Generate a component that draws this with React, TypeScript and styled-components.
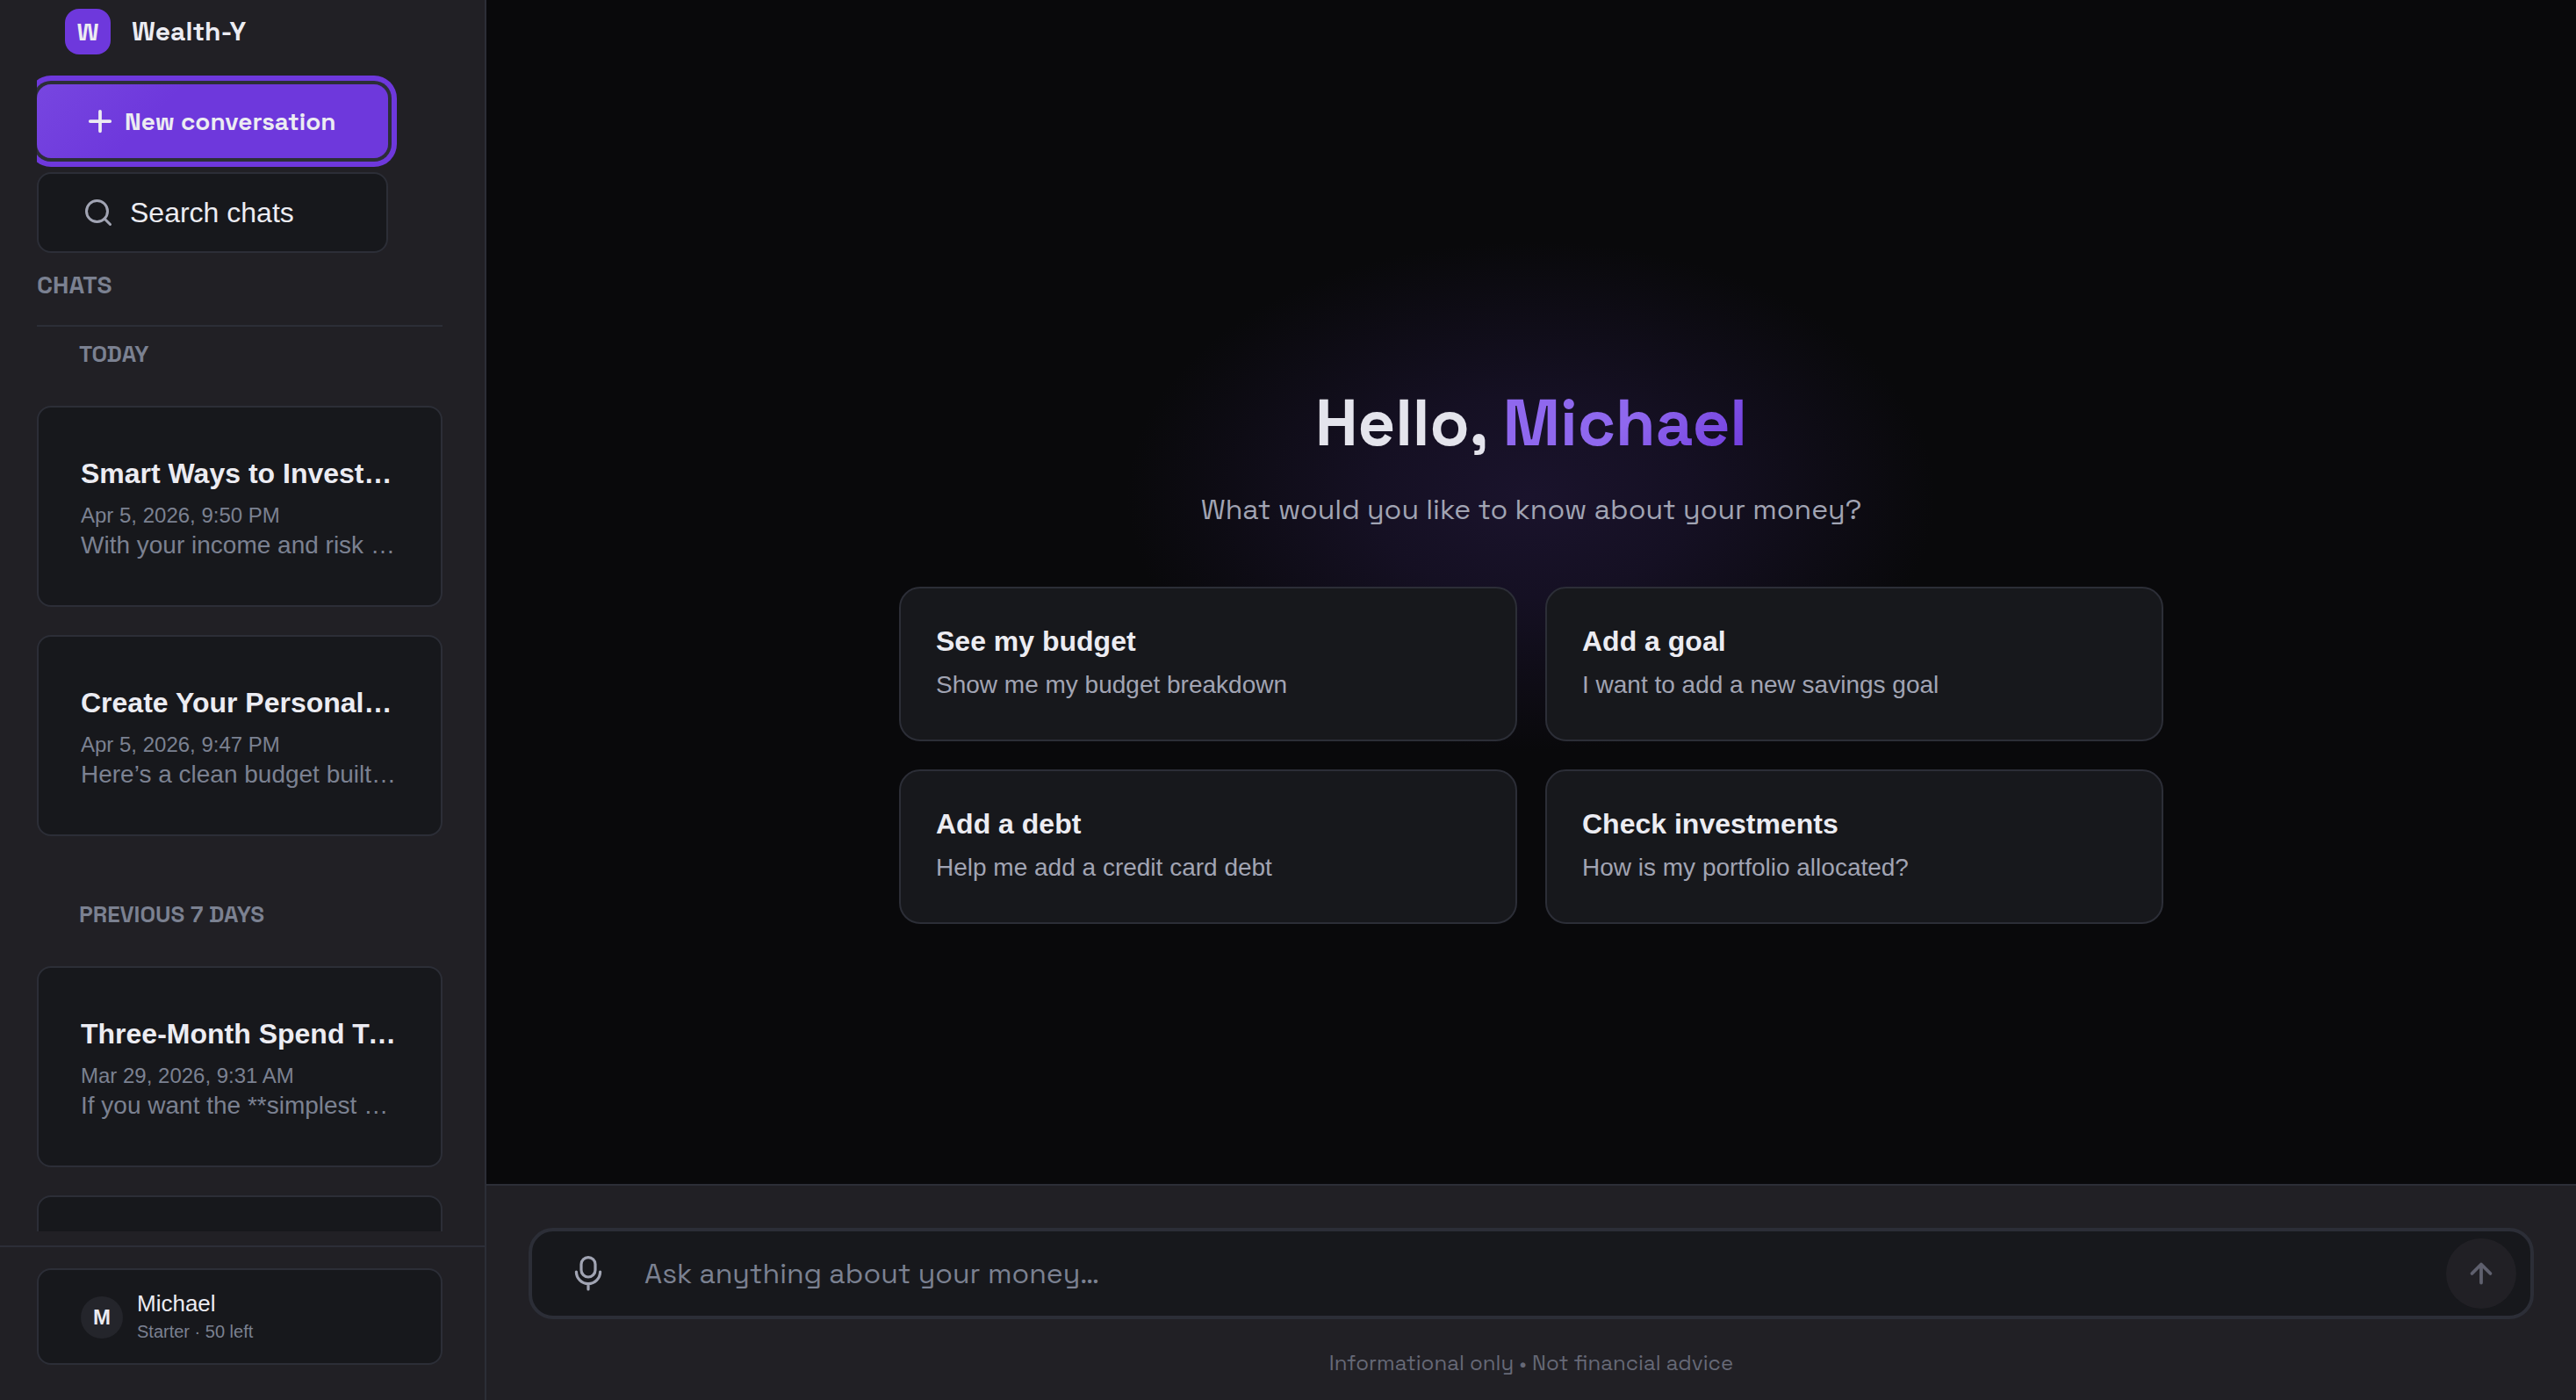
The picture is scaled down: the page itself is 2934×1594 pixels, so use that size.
import React from "react";
import styled, { createGlobalStyle, css } from "styled-components";

const display = `"Space Grotesk", Inter, "Liberation Sans", sans-serif`;
const body = `"Liberation Sans", Arial, sans-serif`;

const color = {
  page: "#09090b",
  panel: "#212025",
  card: "#17181c",
  line: "#2c2e37",
  text: "#ececf2",
  heading: "#e4e4ec",
  soft: "#a1a4b3",
  muted: "#7b8191",
  faint: "#666977",
  accent: "#6e38dc",
  accentLight: "#8f68ee",
};

const GlobalStyle = createGlobalStyle`
  *, *::before, *::after { box-sizing: border-box; }
  body { margin: 0; background: ${color.page}; }
  button, input { font: inherit; color: inherit; }
  h1, h2, h3, p, ul { margin: 0; padding: 0; }
  ul { list-style: none; }
`;

const Layout = styled.div`
  display: flex;
  height: 100vh;
  color: ${color.text};
  background: ${color.page};
  font-family: ${body};
`;

const surface = css`
  background: ${color.card};
  border: 2px solid ${color.line};
  border-radius: 16px;
`;

const Sidebar = styled.aside`
  display: flex;
  flex-direction: column;
  flex: 0 0 554px;
  min-width: 0;
  min-height: 0;
  background: ${color.panel};
  border-right: 2px solid ${color.line};
`;

const SidebarBody = styled.div`
  display: flex;
  flex-direction: column;
  flex: 1;
  min-height: 0;
  margin: 0 48px 16px 42px;
  overflow: hidden;
`;

const Brand = styled.header`
  display: flex;
  align-items: center;
  gap: 24px;
  padding: 10px 32px 0;
  font: 700 30px/52px ${display};
`;

const Logo = styled.span`
  display: grid;
  place-items: center;
  width: 52px;
  height: 52px;
  border-radius: 16px;
  background: ${color.accent};
  font: 700 28px/1 ${display};
`;

const Actions = styled.div`
  display: flex;
  flex-direction: column;
  gap: 16px;
  padding: 34px 62px 0 0;
`;

const NewConversation = styled.button`
  display: flex;
  align-items: center;
  gap: 10px;
  height: 84px;
  padding: 0 54px;
  border: 0;
  border-radius: 16px;
  background: linear-gradient(135deg, #7746e0, ${color.accent} 35%);
  box-shadow: 0 0 0 4px ${color.line}, 0 0 0 10px ${color.accent};
  font: 700 28px/36px ${display};
  white-space: nowrap;
`;

const SearchButton = styled.button`
  ${surface}
  display: flex;
  align-items: center;
  gap: 18px;
  height: 92px;
  padding: 0 50px;
  font: 400 32px/40px ${body};

  svg { color: ${color.soft}; }
`;

const SectionTitle = styled.h2`
  padding: 16px 0 26px;
  border-bottom: 2px solid ${color.line};
  color: ${color.muted};
  font: 700 28px/40px ${display};
`;

const Group = styled.section`
  padding-bottom: 58px;
`;

const GroupTitle = styled.h3`
  padding: 15px 48px 43px;
  color: ${color.muted};
  font: 600 26px/32px ${display};
`;

const ChatList = styled.ul`
  display: grid;
  grid-template-columns: minmax(0, 1fr);
  gap: 32px;
`;

const ChatCard = styled.button`
  ${surface}
  display: block;
  width: 100%;
  min-height: 229px;
  padding: 54px 48px 50px;
  text-align: left;
`;

const line = css`
  display: block;
  overflow: hidden;
  white-space: nowrap;
  text-overflow: ellipsis;
`;

const ChatTitle = styled.span`
  ${line}
  margin-bottom: 12px;
  font: 700 32px/40px ${body};
`;

const ChatDate = styled.span`
  ${line}
  color: ${color.muted};
  font: 400 24px/32px ${body};
`;

const ChatPreview = styled.span`
  ${line}
  color: ${color.muted};
  font: 400 28px/36px ${body};
`;

const SidebarFooter = styled.footer`
  padding: 24px 48px 40px 42px;
  border-top: 2px solid ${color.line};
`;

const Profile = styled.button`
  ${surface}
  display: flex;
  align-items: center;
  gap: 16px;
  width: 100%;
  height: 110px;
  padding: 2px 48px 0;
  text-align: left;
`;

const Avatar = styled.span`
  display: grid;
  place-items: center;
  width: 48px;
  height: 48px;
  border-radius: 50%;
  background: #24252b;
  font: 700 24px/1 ${body};
`;

const ProfileName = styled.span`
  display: block;
  font: 400 26px/32px ${body};
`;

const ProfilePlan = styled.span`
  display: block;
  color: ${color.muted};
  font: 400 20px/32px ${body};
`;

const Main = styled.main`
  display: flex;
  flex-direction: column;
  flex: 1;
  min-width: 0;
`;

const Welcome = styled.div`
  display: flex;
  flex-direction: column;
  align-items: center;
  justify-content: center;
  flex: 1;
  padding: 140px 48px 0;
  background: radial-gradient(ellipse 460px 290px at 50% 565px, #1a132c, #151023 40%, ${color.page});
`;

const Greeting = styled.h1`
  color: ${color.heading};
  font: 700 74px/92px ${display};
`;

const Name = styled.span`
  background: linear-gradient(135deg, ${color.accentLight} 50%, ${color.accent});
  background-clip: text;
  color: transparent;
`;

const Question = styled.p`
  margin: 28px 0 64px;
  color: ${color.soft};
  font: 400 32px/48px ${display};
`;

const Suggestions = styled.div`
  display: grid;
  grid-template-columns: 1fr 1fr;
  gap: 32px;
  width: 100%;
  max-width: 1440px;
`;

const Suggestion = styled.button`
  ${surface}
  border-radius: 24px;
  padding: 40px 40px 42px;
  text-align: left;
`;

const SuggestionTitle = styled.span`
  display: block;
  margin-bottom: 10px;
  font: 700 32px/40px ${body};
`;

const SuggestionText = styled.span`
  display: block;
  color: ${color.soft};
  font: 400 28px/40px ${body};
`;

const Composer = styled.form`
  padding: 48px 48px 24px;
  border-top: 2px solid ${color.line};
  background: ${color.panel};
`;

const Field = styled.div`
  display: flex;
  align-items: center;
  gap: 24px;
  height: 104px;
  padding: 0 16px 0 24px;
  border: 4px solid ${color.line};
  border-radius: 28px;
  background: ${color.card};
`;

const RoundButton = styled.button<{ $filled?: boolean }>`
  display: grid;
  place-items: center;
  width: 80px;
  height: 80px;
  padding: 0;
  border: 0;
  border-radius: 50%;
  color: ${(p) => (p.$filled ? "#5f606e" : color.soft)};
  background: ${(p) => (p.$filled ? color.panel : "transparent")};
`;

const Prompt = styled.input`
  flex: 1;
  min-width: 0;
  padding: 0;
  border: 0;
  outline: 0;
  background: transparent;
  font: 400 32px/48px ${display};

  &::placeholder { color: ${color.muted}; opacity: 1; }
`;

const Disclaimer = styled.p`
  margin-top: 32px;
  color: ${color.faint};
  font: 400 24px/36px ${display};
  text-align: center;
`;

type IconProps = { size: number; stroke: number; children: React.ReactNode };

const Icon = ({ size, stroke, children }: IconProps) => (
  <svg
    width={size}
    height={size}
    viewBox="0 0 24 24"
    fill="none"
    stroke="currentColor"
    strokeWidth={stroke}
    strokeLinecap="round"
    strokeLinejoin="round"
    aria-hidden="true"
  >
    {children}
  </svg>
);

const groups = [
  {
    title: "TODAY",
    chats: [
      { title: "Smart Ways to Invest Your Money", date: "Apr 5, 2026, 9:50 PM", preview: "With your income and risk tolerance" },
      { title: "Create Your Personal Budget", date: "Apr 5, 2026, 9:47 PM", preview: "Here’s a clean budget built around you" },
    ],
  },
  {
    title: "PREVIOUS 7 DAYS",
    chats: [
      { title: "Three-Month Spend Trends", date: "Mar 29, 2026, 9:31 AM", preview: "If you want the **simplest answer**" },
      { title: "", date: "", preview: "" },
    ],
  },
];

const suggestions = [
  { title: "See my budget", text: "Show me my budget breakdown" },
  { title: "Add a goal", text: "I want to add a new savings goal" },
  { title: "Add a debt", text: "Help me add a credit card debt" },
  { title: "Check investments", text: "How is my portfolio allocated?" },
];

export default function App() {
  return (
    <Layout>
      <GlobalStyle />
      <Sidebar>
        <SidebarBody>
          <Brand>
            <Logo>W</Logo>
            Wealth-Y
          </Brand>
          <Actions>
            <NewConversation type="button">
              <Icon size={36} stroke={2.5}>
                <path d="M12 4.5v15M4.5 12h15" />
              </Icon>
              New conversation
            </NewConversation>
            <SearchButton type="button">
              <Icon size={36} stroke={2}>
                <circle cx="11" cy="11" r="8" />
                <path d="m21 21-4.35-4.35" />
              </Icon>
              Search chats
            </SearchButton>
          </Actions>
          <SectionTitle>CHATS</SectionTitle>
          {groups.map((group) => (
            <Group key={group.title}>
              <GroupTitle>{group.title}</GroupTitle>
              <ChatList>
                {group.chats.map((chat) => (
                  <li key={chat.title}>
                    <ChatCard type="button">
                      <ChatTitle>{chat.title}</ChatTitle>
                      <ChatDate>{chat.date}</ChatDate>
                      <ChatPreview>{chat.preview}</ChatPreview>
                    </ChatCard>
                  </li>
                ))}
              </ChatList>
            </Group>
          ))}
        </SidebarBody>
        <SidebarFooter>
          <Profile type="button">
            <Avatar>M</Avatar>
            <span>
              <ProfileName>Michael</ProfileName>
              <ProfilePlan>Starter · 50 left</ProfilePlan>
            </span>
          </Profile>
        </SidebarFooter>
      </Sidebar>
      <Main>
        <Welcome>
          <Greeting>
            Hello, <Name>Michael</Name>
          </Greeting>
          <Question>What would you like to know about your money?</Question>
          <Suggestions>
            {suggestions.map((item) => (
              <Suggestion type="button" key={item.title}>
                <SuggestionTitle>{item.title}</SuggestionTitle>
                <SuggestionText>{item.text}</SuggestionText>
              </Suggestion>
            ))}
          </Suggestions>
        </Welcome>
        <Composer onSubmit={(e) => e.preventDefault()}>
          <Field>
            <RoundButton type="button" aria-label="Dictate">
              <Icon size={48} stroke={1.6}>
                <path d="M12 2.8a4 4 0 0 0-4 4V10a4 4 0 0 0 8 0V6.8a4 4 0 0 0-4-4z" />
                <path d="M5.2 11a6.8 6.8 0 0 0 13.6 0M12 17.8v3.2" />
              </Icon>
            </RoundButton>
            <Prompt type="text" aria-label="Message" placeholder="Ask anything about your money…" />
            <RoundButton type="submit" $filled aria-label="Send">
              <Icon size={36} stroke={2.5}>
                <path d="M12 19V5M5 12l7-7 7 7" />
              </Icon>
            </RoundButton>
          </Field>
          <Disclaimer>Informational only • Not financial advice</Disclaimer>
        </Composer>
      </Main>
    </Layout>
  );
}
